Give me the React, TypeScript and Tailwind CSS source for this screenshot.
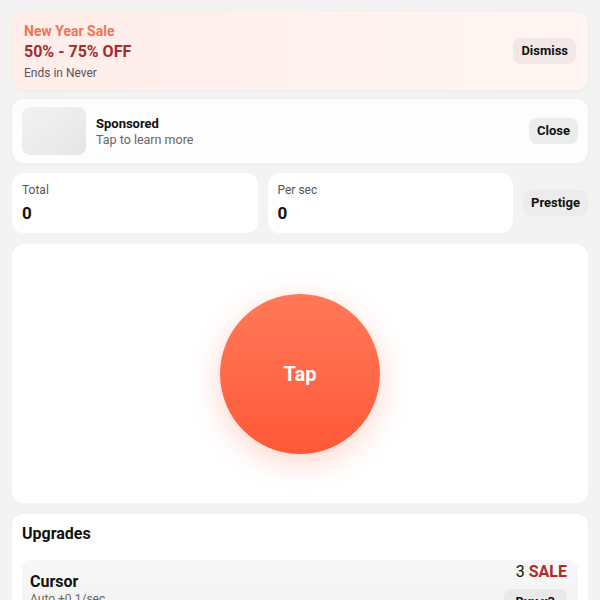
const stats = [
  { label: "Total", value: "0" },
  { label: "Per sec", value: "0" },
];

export default function App() {
  return (
    <div
      className="min-h-[600px] w-full bg-[#f3f3f3] p-3 flex flex-col gap-[9px] text-[#111]"
      style={{ fontFamily: "Roboto, 'Liberation Sans', sans-serif" }}
    >
      {/* Sale banner */}
      <div className="flex items-center justify-between rounded-xl bg-gradient-to-r from-[#ffede9] to-[#fff6f4] pl-3 pr-3 h-[78px] shadow-[0_1px_4px_rgba(0,0,0,0.04)]">
        <div className="flex flex-col">
          <div className="text-[14px] font-bold text-[#ef7557] leading-[18px]">New Year Sale</div>
          <div className="text-[16px] font-bold text-[#a72b2b] leading-[22px] mt-[1px]">50% - 75% OFF</div>
          <div className="text-[12px] text-[#555] leading-[16px] mt-[2px]">Ends in Never</div>
        </div>
        <button className="rounded-lg bg-[#f1e8e7] px-2 h-[26px] text-[13px] font-bold">Dismiss</button>
      </div>

      {/* Sponsored */}
      <div className="flex items-center rounded-xl bg-[#fdfdfd] h-[64px] px-[10px] shadow-[0_1px_4px_rgba(0,0,0,0.04)]">
        <div className="w-[64px] h-[48px] rounded-lg bg-gradient-to-br from-[#f2f2f2] to-[#e6e6e6]" />
        <div className="ml-[10px] flex flex-col flex-1">
          <div className="text-[13px] font-bold leading-[16px]">Sponsored</div>
          <div className="text-[12.5px] text-[#666] leading-[15px]">Tap to learn more</div>
        </div>
        <button className="rounded-lg bg-[#ececec] px-2 h-[26px] text-[13px] font-bold">Close</button>
      </div>

      {/* Stats */}
      <div className="flex items-center gap-[10px] mt-[1px]">
        {stats.map((s) => (
          <div key={s.label} className="flex-1 rounded-xl bg-white h-[60px] px-[10px] pt-[10px]">
            <div className="text-[12px] text-[#555] leading-[14px]">{s.label}</div>
            <div className="text-[17px] font-bold leading-[22px] mt-[5px]">{s.value}</div>
          </div>
        ))}
        <button className="rounded-lg bg-[#ececec] px-2 h-[26px] text-[13px] font-bold">Prestige</button>
      </div>

      {/* Tap area */}
      <div className="flex items-center justify-center rounded-xl bg-white h-[259px] mt-[2px]">
        <button className="w-[160px] h-[160px] rounded-full bg-gradient-to-b from-[#ff7858] to-[#ff5837] text-white text-[20px] font-bold shadow-[0_8px_30px_rgba(255,100,70,0.28)]">
          Tap
        </button>
      </div>

      {/* Upgrades */}
      <div className="rounded-xl bg-white px-[10px] pt-[10px] mt-[2px] h-[120px]">
        <div className="text-[16px] font-bold leading-[20px]">Upgrades</div>
        <div className="mt-[16px] rounded-lg bg-gradient-to-b from-[#f7f7f7] to-[#f3f3f3] pl-2 pr-[11px] pt-[2px] flex justify-between">
          <div className="pt-[10px]">
            <div className="text-[16px] font-bold leading-[20px]">Cursor</div>
            <div className="text-[12px] text-[#666] leading-[14px]">Auto +0.1/sec</div>
          </div>
          <div className="flex flex-col items-end">
            <div className="text-[16px] leading-[20px]">
              3 <span className="font-bold text-[#b02a2a]">SALE</span>
            </div>
            <button className="mt-[7px] rounded-lg bg-[#e9e9e9] px-3 h-[26px] text-[13px] font-bold">Buy x3</button>
          </div>
        </div>
      </div>
    </div>
  );
}
